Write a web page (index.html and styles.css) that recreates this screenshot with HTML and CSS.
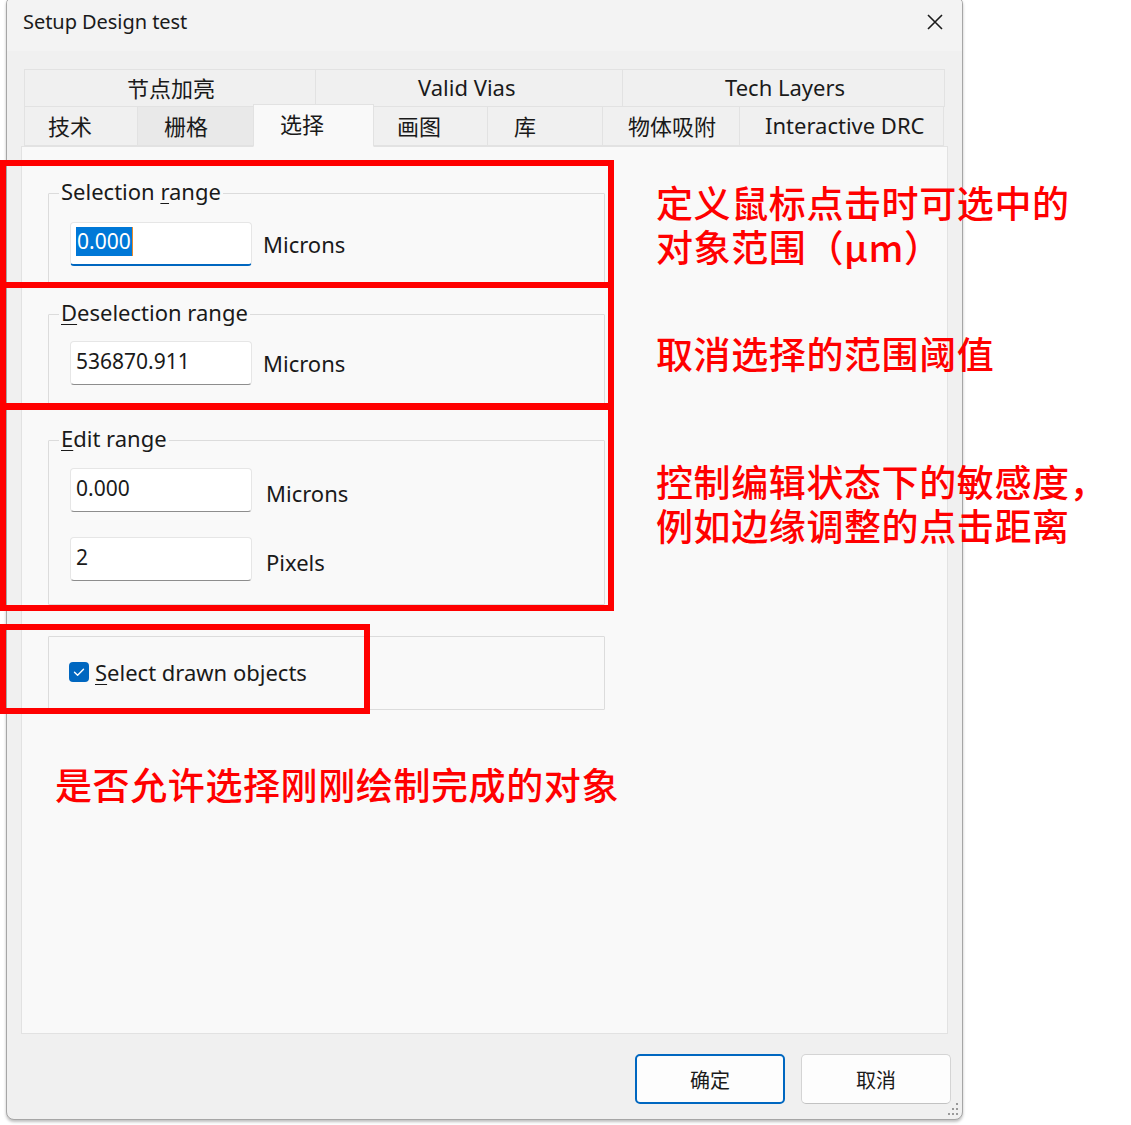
FILE: index.html
```html
<!DOCTYPE html>
<html lang="zh-CN">
<head>
<meta charset="utf-8">
<title>Setup Design test</title>
<link rel="stylesheet" href="styles.css">
</head>
<body>
<div class="stage">
  <div class="dialog">
    <div class="titlebar">
      <span class="title">Setup Design test</span>
      <svg class="close" width="18" height="18" viewBox="0 0 18 18"><path d="M2 2 L16 16 M16 2 L2 16" stroke="#1b1b1b" stroke-width="1.6" fill="none"/></svg>
    </div>
    <div class="content">
      <div class="tabs">
        <div class="tabrow row1">
          <div class="tab t-a">节点加亮</div>
          <div class="tab t-b">Valid Vias</div>
          <div class="tab t-c">Tech Layers</div>
        </div>
        <div class="tabrow row2">
          <div class="tab t1">技术</div>
          <div class="tab t2 hover">栅格</div>
          <div class="tab t3 active">选择</div>
          <div class="tab t4">画图</div>
          <div class="tab t5">库</div>
          <div class="tab t6">物体吸附</div>
          <div class="tab t7">Interactive DRC</div>
        </div>
      </div>
      <div class="panel">
        <fieldset class="group g1">
          <legend>Selection <u>r</u>ange</legend>
          <div class="field">
            <div class="input focused"><span class="selected">0.000</span><span class="caret"></span></div>
            <span class="unit">Microns</span>
          </div>
        </fieldset>
        <fieldset class="group g2">
          <legend><u>D</u>eselection range</legend>
          <div class="field">
            <div class="input">536870.911</div>
            <span class="unit">Microns</span>
          </div>
        </fieldset>
        <fieldset class="group g3">
          <legend><u>E</u>dit range</legend>
          <div class="field">
            <div class="input">0.000</div>
            <span class="unit low">Microns</span>
          </div>
          <div class="field second">
            <div class="input">2</div>
            <span class="unit low">Pixels</span>
          </div>
        </fieldset>
        <div class="group g4">
          <div class="check">
            <svg width="20" height="20" viewBox="0 0 20 20"><rect x="0" y="0" width="20" height="20" rx="4" fill="#0067c0"/><path d="M5.5 10.3 L8.6 13.2 L14.5 7.2" stroke="#fff" stroke-width="1.4" fill="none" stroke-linecap="round" stroke-linejoin="round"/></svg>
            <span><u>S</u>elect drawn objects</span>
          </div>
        </div>
      </div>
      <div class="buttons">
        <div class="btn primary">确定</div>
        <div class="btn">取消</div>
      </div>
    </div>
    <svg class="grip" width="14" height="14" viewBox="0 0 14 14" fill="#9a9a9a"><rect x="11" y="1" width="2" height="2"/><rect x="7" y="6" width="2" height="2"/><rect x="11" y="6" width="2" height="2"/><rect x="3" y="11" width="2" height="2"/><rect x="7" y="11" width="2" height="2"/><rect x="11" y="11" width="2" height="2"/></svg>
  </div>

  <div class="box b1"></div>
  <div class="box b2"></div>
  <div class="box b3"></div>
  <div class="box b4"></div>

  <div class="note n1">定义鼠标点击时可选中的</div>
  <div class="note n1b">对象范围（μm）</div>
  <div class="note n2">取消选择的范围阈值</div>
  <div class="note n3">控制编辑状态下的敏感度，</div>
  <div class="note n3b">例如边缘调整的点击距离</div>
  <div class="note n4">是否允许选择刚刚绘制完成的对象</div>
</div>
</body>
</html>
```
FILE: styles.css
```css
* { box-sizing: border-box; }
html, body { margin: 0; padding: 0; background: #ffffff; }
body {
  width: 1131px;
  height: 1125px;
  overflow: hidden;
  font-family: "Noto Sans", "Noto Sans CJK SC", sans-serif;
  color: #1a1a1a;
}
.stage { position: relative; width: 1131px; height: 1125px; }

.dialog {
  position: relative;
  margin-left: 6px;
  margin-top: -4px;
  width: 957px;
  height: 1124px;
  border: 1px solid #a6a6a6;
  border-radius: 8px;
  background: #f0f0f0;
  box-shadow: 0 2px 3px rgba(0,0,0,0.25);
  overflow: hidden;
}

.titlebar {
  height: 54px;
  background: #f3f3f3;
  display: flex;
  align-items: center;
  justify-content: space-between;
  padding: 0 17px 5px 16px;
}
.title { font-size: 20px; letter-spacing: -0.05px; }
.close { display: block; margin-top: 0; margin-right: 1px; }

.content { padding: 18px 13px 0 14px; }

.tabs { margin-left: 3px; width: 921px; font-size: 22px; }
.tabrow { display: flex; }
.tab {
  background: #f0f0f0;
  border: 1px solid #e2e2e2;
  margin-left: -1px;
  white-space: nowrap;
  display: flex;
  align-items: center;
}
.tab:first-child { margin-left: 0; }
.row1 .tab { height: 38px; padding-left: 102px; padding-bottom: 2px; }
.t-a { width: 292px; }
.t-b { width: 308px; }
.t-c { width: 323px; }
.row2 { margin-top: -1px; height: 40px; align-items: flex-end; }
.row2 .tab { height: 40px; padding-left: 23px; padding-bottom: 2px; }
.t1 { width: 114px; }
.t2 { width: 117px; padding-left: 26px !important; }
.t3 { width: 121px; }
.t4 { width: 115px; }
.t5 { width: 116px; padding-left: 26px !important; }
.t6 { width: 138px; padding-left: 25px !important; }
.t7 { width: 205px; padding-left: 25px !important; }
.hover { background: #e9e9e9; }
.active {
  position: relative;
  z-index: 2;
  height: 43px !important;
  margin-bottom: -1px;
  background: #f9f9f9;
  border-bottom-color: #f9f9f9;
  padding-left: 26px !important;
  padding-bottom: 6px !important;
}

.panel {
  position: relative;
  z-index: 1;
  width: 927px;
  height: 888px;
  background: #f9f9f9;
  border: 1px solid #e2e2e2;
  padding: 34px 0 0 26px;
  font-size: 22px;
}

.group {
  width: 557px;
  margin: 0;
  border: 1px solid #dcdcdc;
  border-radius: 1px;
  background: #f9f9f9;
}
fieldset.group { padding: 0 0 0 21px; }
legend {
  padding: 0 2px 4px 2px;
  margin-left: -11px;
  line-height: 20px;
  height: 24px;
  font-size: 22px;
}
legend u, .check u { text-decoration-thickness: 1px; text-underline-offset: 3px; }

.g1 { padding-top: 17px !important; padding-bottom: 17px !important; }
.g2 { margin-top: 18px !important; padding-top: 15px !important; padding-bottom: 22px !important; }
.g3 { margin-top: 20px !important; padding-top: 16px !important; padding-bottom: 23px !important; }
.g4 { margin-top: 31px; height: 74px; display: flex; align-items: center; padding-left: 20px; padding-bottom: 3px; }

.field { display: flex; align-items: center; gap: 11px; }
.field.second { margin-top: 25px; }
.input {
  width: 182px;
  height: 44px;
  background: #ffffff;
  border: 1px solid #e6e6e6;
  border-bottom: 1px solid #8d8d8d;
  border-radius: 4px;
  padding: 0 0 5px 5px;
  display: flex;
  align-items: center;
  font-size: 21px;
  color: #1a1a1a;
}
.input.focused { border-bottom: 2px solid #0067c0; padding-bottom: 4px; }
.selected { background: #0078d7; color: #ffffff; line-height: 29px; height: 29px; padding: 0 1px; }
.caret { width: 1px; height: 29px; background: #e98c2c; }
.unit { font-size: 22px; }
.unit.low { margin-left: 3px; padding-top: 6px; }

.check { display: flex; align-items: center; gap: 6px; font-size: 22px; }
.check svg { display: block; }

.buttons {
  display: flex;
  justify-content: flex-end;
  gap: 16px;
  margin-top: 20px;
  margin-right: -2px;
}
.btn {
  width: 150px;
  height: 50px;
  background: #fdfdfd;
  border: 1px solid #d4d4d4;
  border-bottom-color: #c2c2c2;
  border-radius: 5px;
  display: flex;
  align-items: center;
  justify-content: center;
  font-size: 20px;
  font-family: "Noto Sans CJK SC", sans-serif;
}
.btn.primary { border: 2px solid #0067c0; }

.grip { position: absolute; right: 3px; bottom: 3px; }

.box {
  position: absolute;
  border: 6px solid #ff0000;
  z-index: 5;
}
.b1 { left: 0; top: 164px; width: 614px; height: 128px; }
.b2 { left: 0; top: 286px; width: 614px; height: 127px; }
.b3 { left: 0; top: 408px; width: 614px; height: 207px; }
.b4 { left: 0; top: 628px; width: 370px; height: 90px; }

.note {
  position: absolute;
  z-index: 5;
  color: #ff0000;
  font-family: "Noto Sans CJK SC", sans-serif;
  font-size: 37px;
  line-height: 44px;
  height: 44px;
  letter-spacing: 0.6px;
  white-space: nowrap;
  font-weight: 500;
}
.n1 { left: 656px; top: 184px; }
.n1b { left: 656px; top: 228px; }
.n2 { left: 656px; top: 335px; }
.n3 { left: 656px; top: 463px; }
.n3b { left: 656px; top: 507px; }
.n4 { left: 55px; top: 766px; }
```
